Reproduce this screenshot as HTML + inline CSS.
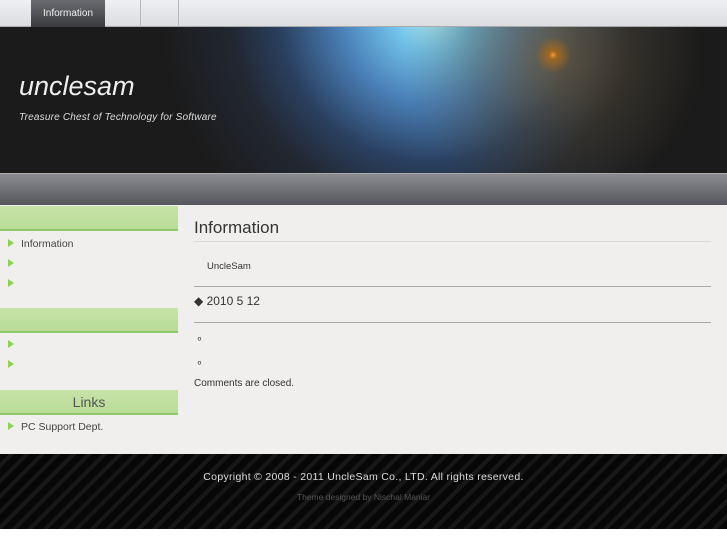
<!DOCTYPE html>
<html><head><style>
*{margin:0;padding:0;box-sizing:border-box}
body{width:727px;height:545px;background:#fff;font-family:"Liberation Sans",sans-serif;position:relative;overflow:hidden}
.nav{position:absolute;left:0;top:0;width:727px;height:27px;background:linear-gradient(#eef0f3,#dcdde0);border-bottom:1px solid #aaa}
.tab{position:absolute;left:31px;top:0;width:74px;height:27px;background:linear-gradient(#6a6b70,#3a3b3f);color:#eee;font-size:10px;text-align:center;line-height:27px}
.sep{position:absolute;top:0;width:1px;height:27px;background:#b8b9bc}
.hdr{position:absolute;left:0;top:27px;width:727px;height:146px;background:#1b1b1b;overflow:hidden}
.glow{position:absolute;left:0;top:0;width:727px;height:146px;background:
radial-gradient(circle at 553px 28px,#f0a030 0,#a06820 4px,rgba(120,90,40,.55) 18px,rgba(90,70,30,.3) 80px,rgba(0,0,0,0) 150px),
radial-gradient(circle at 430px -15px,#b0f0f8 0,#70c0e8 40px,#4a80b8 90px,#2a4060 150px,rgba(40,50,70,.5) 200px,rgba(27,27,27,0) 270px)}
.t1{position:absolute;left:19px;top:44px;color:#eee;font-size:27px;font-style:italic}
.t2{position:absolute;left:19px;top:85px;color:#ddd;font-size:10px;font-style:italic;letter-spacing:.2px}
.bar{position:absolute;left:0;top:173px;width:727px;height:32px;background:linear-gradient(#8a8c92,#55565b);border-top:1px solid #aaa}
.main{position:absolute;left:0;top:205px;width:727px;height:249px;background:#f0efed}
.gh{position:absolute;left:0;width:178px;height:25px;background:linear-gradient(#c8e3a8,#b8dc98);border-bottom:2px solid #8fc96a;text-align:center;color:#555;font-size:14px;line-height:24px}
.li{position:absolute;left:8px;font-size:10.5px;color:#444}
.li:before{content:"";display:inline-block;border-left:6px solid #8fcf5a;border-top:4px solid transparent;border-bottom:4px solid transparent;margin-right:7px}
.c{position:absolute;color:#333}
.hr{position:absolute;left:194px;width:517px;height:1px;background:#a8a8a8}
.ft{position:absolute;left:0;top:454px;width:727px;height:75px;background:repeating-linear-gradient(-45deg,#070707 0,#070707 7px,#171717 7px,#171717 11px);text-align:center}
</style></head><body>
<div class="nav"><div class="tab">Information</div><div class="sep" style="left:140px"></div><div class="sep" style="left:178px"></div></div>
<div class="hdr"><div class="glow"></div><div class="t1">unclesam</div><div class="t2">Treasure Chest of Technology for Software</div></div>
<div class="bar"></div>
<div class="main"></div>
<div class="gh" style="top:206px"></div>
<div class="li" style="top:238px">Information</div>
<div class="li" style="top:258px"></div>
<div class="li" style="top:278px"></div>
<div class="gh" style="top:308px"></div>
<div class="li" style="top:339px"></div>
<div class="li" style="top:359px"></div>
<div class="gh" style="top:390px">Links</div>
<div class="li" style="top:421px">PC Support Dept.</div>
<div class="c" style="left:194px;top:218px;font-size:17px">Information</div>
<div class="hr" style="top:241px;background:#e0d8d8"></div>
<div class="c" style="left:207px;top:261px;font-size:9.5px">UncleSam</div>
<div class="hr" style="top:286px"></div>
<div class="c" style="left:194px;top:294px;font-size:12px">◆ 2010 5 12</div>
<div class="hr" style="top:322px"></div>
<div class="c" style="left:196px;top:332px;font-size:11px">∘</div>
<div class="c" style="left:196px;top:356px;font-size:11px">∘</div>
<div class="c" style="left:194px;top:378px;font-size:10px">Comments are closed.</div>
<div class="ft"><div style="color:#ddd;font-size:10.5px;letter-spacing:.3px;padding-top:17px">Copyright © 2008 - 2011 UncleSam Co., LTD. All rights reserved.</div><div style="color:#555;font-size:8.5px;margin-top:9px">Theme designed by Nischal Maniar</div></div>
</body></html>
